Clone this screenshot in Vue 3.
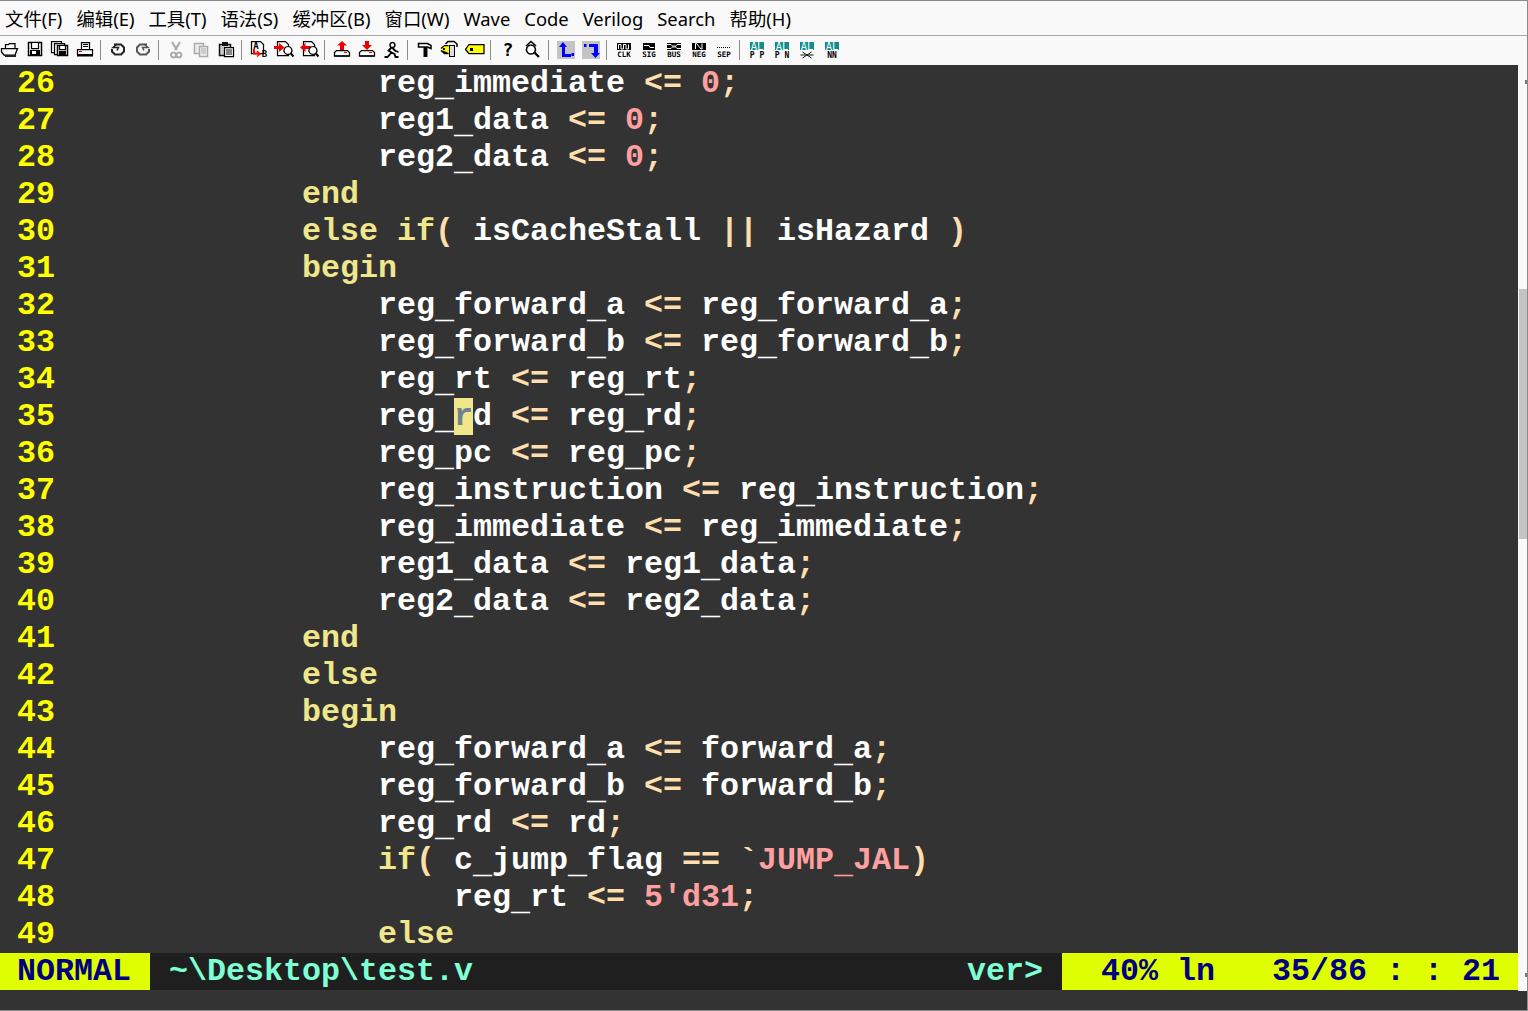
<script setup>
const source = [
  [26, "                reg_immediate <= 0;"],
  [27, "                reg1_data <= 0;"],
  [28, "                reg2_data <= 0;"],
  [29, "            end"],
  [30, "            else if( isCacheStall || isHazard )"],
  [31, "            begin"],
  [32, "                reg_forward_a <= reg_forward_a;"],
  [33, "                reg_forward_b <= reg_forward_b;"],
  [34, "                reg_rt <= reg_rt;"],
  [35, "                reg_§rd <= reg_rd;"],
  [36, "                reg_pc <= reg_pc;"],
  [37, "                reg_instruction <= reg_instruction;"],
  [38, "                reg_immediate <= reg_immediate;"],
  [39, "                reg1_data <= reg1_data;"],
  [40, "                reg2_data <= reg2_data;"],
  [41, "            end"],
  [42, "            else"],
  [43, "            begin"],
  [44, "                reg_forward_a <= forward_a;"],
  [45, "                reg_forward_b <= forward_b;"],
  [46, "                reg_rd <= rd;"],
  [47, "                if( c_jump_flag == `JUMP_JAL)"],
  [48, "                    reg_rt <= 5'd31;"],
  [49, "                else"]
]

const tokenRe = /§.|\s+|\b(?:begin|end|else|if)\b|<=|==|\|\||[;()`]|JUMP|JAL|_|\d+'d\d+|\b\d+\b|[a-zA-Z0-9]+/g
function classify(t) {
  if (t[0] === '§') return 'cursor'
  if (t === '_') return 'under'
  if (/^\s+$/.test(t)) return 'plain'
  if (/^(begin|end|else|if)$/.test(t)) return 'kw'
  if (/^(<=|==|\|\||[;()`])$/.test(t)) return 'op'
  if (t === 'JUMP' || t === 'JAL' || /^\d/.test(t)) return 'num'
  return 'plain'
}
const lines = source.map(([n, text]) => ({
  n,
  tokens: text.match(tokenRe).map((t) => ({
    c: classify(t),
    t: t[0] === '§' ? t.slice(1) : t
  }))
}))
// the underscore inside `JUMP_JAL is part of the pink macro name
for (const l of lines) {
  l.tokens.forEach((t, i) => {
    if (t.c === 'under' && l.tokens[i - 1]?.t === 'JUMP') t.c = 'under pink'
  })
}

const status = {
  mode: 'NORMAL',
  file: '~\\Desktop\\test.v',
  type: 'ver>',
  pos: '40% ln   35/86 : : 21'
}

const menus = ['文件(F)', '编辑(E)', '工具(T)', '语法(S)', '缓冲区(B)', '窗口(W)', 'Wave', 'Code', 'Verilog', 'Search', '帮助(H)']

const P = (d, fill = 'none', stroke = '#000', w = 1.25) => ({ d, fill, stroke, w })
const F = (d, fill = '#000') => ({ d, fill, stroke: 'none', w: 0 })
const L = (x, y, text, size, fill = '#000', weight = 700) => ({ x, y, text, size, fill, weight })

const wave = {
  clk: P('M4.5 9V4.5h2.500V9h2.500V4.500H12V9h2.500V4.500', 'none', '#fff', 1),
  sig: P('M5 5.500h5l1 2h4', 'none', '#fff', 1),
  bus: P('M3 4.500h4l3 3 3-3h4M3 8.500h4l3-3 3 3h4', 'none', '#fff', 1),
  neg: P('M6.500 9V3.500h1L12 9h1V3.500', 'none', '#fff', 1)
}
const dots = 'M3 7h1v1H3zM5 7h1v1H5zM7 7h1v1H7zM9 7h1v1H9zM11 7h1v1h-1zM13 7h1v1h-1zM15 7h1v1h-1z'

const tray = [
  P('M4.500 10.500h11l2 2v3.500h-15v-3.500z', '#fff'),
  F('M3 15h14v2H3z', '#222'),
  F('M12 12h3v1h-3z', '#f00')
]

const icon = (parts, labels = []) => ({ parts, labels })
const alHead = F('M3 2h14v8H3z', '#148a8a')
const al = (parts, labels) => icon([alHead, ...parts], [L(10, 9.5, 'AL', 10.500, '#e8ffff', 400), ...labels])

const groups = [
  [
    icon([P('M5.500 8V4.500h3l1-1h5.500v5', '#fff'), P('M1.500 8.500h16l-2.500 6.500H4l-2.500-3z', '#fff'), F('M5 15h11v2H5z', '#222')]),
    icon([P('M3.500 2.500h13v13h-13z', '#fff', '#000', 1.5), P('M6.500 3v5.500h7V3', '#fff'), F('M5 10h10v5H5z'), F('M7 11h4v3H7z', '#fff')]),
    icon([P('M1.500 1.500h10v11h-10z', '#fff'), P('M4.500 3.500h10v11h-10z', '#fff'), P('M7.500 5.500h10v10h-10z', '#fff', '#000', 1.5), P('M9.500 6v3.500h6V6', '#fff'), F('M9 11h7v4H9z')]),
    icon([P('M6.500 2.500h8v7h-8z', '#fff'), F('M8 4h5v1H8zM8 6h5v1H8z'), P('M2.500 9.500h15v5h-15z', '#fff'), F('M2 15h16v1.500H2z'), F('M4 11h3v1H4z', '#f00')])
  ],
  [
    icon([P('M6 4.500h7l3 3v4l-3 3H7l-3-3V9', 'none', '#222', 2), P('M9 4L5 7.500h5.500l-1.500 3', 'none', '#222', 1.500), F('M7 15h7v1H7z', '#999')]),
    icon([P('M14 4.500H7l-3 3v4l3 3h6l3-3V9', 'none', '#555', 2), P('M11 4l4 3.500H9.500l1.500 3', 'none', '#555', 1.500), F('M7 15h7v1H7z', '#aaa')])
  ],
  [
    icon([P('M6 2l5 8M14 2L9 10', 'none', '#aaa', 2.200), P('M7.500 12.500a2.500 2.500 0 1 1-.1 0M13 12.500a2.500 2.500 0 1 1-.1 0', 'none', '#aaa', 2)]),
    icon([P('M3.500 3.500h9v10h-9z', '#eee', '#aaa', 1.500), P('M8.500 6.500h8v10h-8z', '#eee', '#aaa', 1.500), P('M10 9h5M10 11h5M10 13h5', 'none', '#aaa', 1)]),
    icon([P('M3.500 4.500h11v11h-11z', '#ccc', '#111', 1.500), F('M6 2h6v4H6z', '#111'), P('M8.500 7.500h9v9h-9z', '#fff'), P('M10 10h6M10 12h6M10 14h6', 'none', '#111', 1)])
  ],
  [
    icon([P('M2.500 1.500h9l3 3v9h-12z', '#fff'), P('M5 9v4.500h5', 'none', '#f00', 2), P('M8 11l3 3-3 2.500', 'none', '#f00', 1.500)], [L(7, 9, 'A', 9), L(15.500, 17, 'B', 9)]),
    icon([P('M3.500 1.500h8l3 3v11h-11z', '#fff'), F('M0 6h5V3l5.500 4.500L5 12V9H0z', '#e00'), P('M14 6.500a4 4 0 1 1-.1 0', '#fff'), P('M16.500 13l3 3.500', 'none', '#000', 2)]),
    icon([P('M4.500 1.500h8l3 3v11h-11z', '#fff'), F('M11.500 6h-5V3L1 7.500 6.500 12V9h5z', '#e00'), P('M14 6.500a4 4 0 1 1-.1 0', '#fff'), P('M16.500 13l3 3.500', 'none', '#000', 2)])
  ],
  [
    icon([...tray, F('M10 1l5 4.500h-3V10H8V5.500H5z', '#e00')]),
    icon([...tray, F('M8 1h4v4h3l-5 5-5-5h3z', '#e00')]),
    icon([P('M10.500 2.500a2.500 2.500 0 1 1-.1 0', '#fff', '#000', 1.500), P('M9.500 7.500l-3 3 3 2-4 4.500h-3M10.500 8l3 3 3 1M9.500 12.500l3 1.500 1 3h3', 'none', '#000', 1.800)])
  ],
  [
    icon([P('M3.500 3.500h9l3.500 2v3l-3.500-1.500h-9z', '#fff', '#000', 1.500), F('M8.500 7h3.500v10H8.500z'), F('M12 8h1v9h-1z', '#888')]),
    icon([F('M1 8l3-3h5v8H4l-3-3z', '#ff0'), P('M1 8.500l3.500-3h4M8.500 13.500h-4L1 10.500z', 'none'), F('M3 8h2v2H3z'), F('M9 5h6v12H9z'), F('M10 6h4v10h-4z', '#ddd'), P('M5.500 4l2.500-2.500h6l3 2.500v3', 'none', '#000', 1.500)]),
    icon([F('M4 5h15v8H4L0 9z', '#ff0'), P('M4 4.500h15v9H4L.5 9.500z', 'none'), F('M5 8h3v3H5z')])
  ],
  [
    icon([], [L(10, 16, '?', 18)]),
    icon([P('M8 5a4.500 4.500 0 1 1-.1 0', '#fff', '#000', 1.500), P('M11.500 12.500l4.500 4.500', 'none', '#000', 2.200), P('M3 6l5-4.500L13 6', 'none', '#000', 1.500)])
  ],
  [
    icon([F('M1 1h18v18H1z', '#c4c4c4'), F('M7 2l4 5H9v7h6v3H6V7H3z', '#00f'), F('M15.500 13h2.500v3h-2.500z', '#00f')]),
    icon([F('M1 1h18v18H1z', '#c4c4c4'), F('M3 4h2.500v3H3zM8 4h9v9h2l-4.500 5-4.500-5h3V7H8z', '#00f')])
  ],
  [
    icon([F('M3 3h14v7H3z'), wave.clk], [L(10, 17, 'CLK', 7.500)]),
    icon([F('M4 3h12v7H4z'), wave.sig], [L(10, 17, 'SIG', 7.500)]),
    icon([F('M3 3h14v7H3z'), wave.bus], [L(10, 17, 'BUS', 7.500)]),
    icon([F('M3 3h14v7H3z'), wave.neg], [L(10, 17, 'NEG', 7.500)]),
    icon([F(dots)], [L(10, 17, 'SEP', 7.500)])
  ],
  [
    al([], [L(10, 18, 'P P', 8)]),
    al([], [L(10, 18, 'P N', 8)]),
    al([P('M5.500 12l9 6M14.500 12l-9 6M3.500 15h13', 'none', '#111', 1)], []),
    al([], [L(10, 18, 'NN', 8)])
  ]
]
</script>

<template>
  <div class="window">
    <nav class="menubar">
      <span v-for="m in menus" :key="m">{{ m }}</span>
    </nav>
    <div class="toolbar">
      <template v-for="(group, g) in groups" :key="g">
        <i v-if="g" class="sep"></i>
        <span v-for="(ic, k) in group" :key="k" class="tool">
          <svg width="20" height="20" viewBox="0 0 20 20">
            <path
              v-for="(p, j) in ic.parts"
              :key="j"
              :d="p.d"
              :fill="p.fill"
              :stroke="p.stroke"
              :stroke-width="p.w"
            />
            <text
              v-for="(l, j) in ic.labels"
              :key="'t' + j"
              class="icon-text"
              :x="l.x"
              :y="l.y"
              :font-size="l.size"
              :font-weight="l.weight"
              :fill="l.fill"
              text-anchor="middle"
            >{{ l.text }}</text>
          </svg>
        </span>
      </template>
    </div>
    <div class="middle">
      <main class="editor">
        <div class="code">
          <div v-for="line in lines" :key="line.n" class="row">
            <span class="lnr">{{ line.n }}</span>
            <span class="text"><span v-for="(t, i) in line.tokens" :key="i" :class="t.c">{{ t.t }}</span></span>
          </div>
        </div>
        <footer class="status">
          <span class="mode">{{ status.mode }}</span>
          <span class="file">{{ status.file }}</span>
          <span class="type">{{ status.type }}</span>
          <span class="pos">{{ status.pos }}</span>
        </footer>
      </main>
      <aside class="scrollbar">
        <div class="thumb"></div>
        <i class="grip grip-top"></i>
        <i class="grip grip-bottom"></i>
      </aside>
    </div>
    <div class="cmdline"></div>
  </div>
</template>

<style scoped>
.window {
  width: 1528px;
  height: 1011px;
  box-sizing: border-box;
  display: flex;
  flex-direction: column;
  overflow: hidden;
  background: #f9f9f9;
  border-top: 1px solid #8a8a8a;
  border-bottom: 1px solid #8a8a8a;
  border-right: 1px solid #8a8a8a;
}
.menubar {
  height: 35px;
  box-sizing: border-box;
  flex: none;
  display: flex;
  align-items: center;
  gap: 14px;
  padding: 2px 0 0 5px;
  font: 18.4px/32px "Noto Sans", "Noto Sans CJK SC", sans-serif;
  color: #000;
  border-bottom: 1px solid #a8a8a8;
  white-space: nowrap;
}
.toolbar {
  height: 29px;
  box-sizing: border-box;
  flex: none;
  display: flex;
  align-items: center;
  padding-bottom: 2px;
  margin-left: -2.5px;
}
.tool {
  width: 25px;
  height: 20px;
  flex: none;
  display: flex;
  justify-content: center;
}
.sep {
  width: 1px;
  height: 20px;
  flex: none;
  margin: 0 4.5px 0 2.5px;
  background: #8c8c8c;
}
.icon-text {
  font-family: "DejaVu Sans Mono", "Liberation Mono", monospace;
}
.middle {
  flex: 1;
  min-height: 0;
  display: flex;
}
.editor {
  width: 1518px;
  flex: none;
  display: flex;
  flex-direction: column;
  background: #333333;
  font: 700 31.66px/39px "Liberation Mono", monospace;
  white-space: pre;
  overflow: hidden;
}
.code {
  height: 888px;
  flex: none;
  overflow: hidden;
}
.row {
  height: 37px;
  display: flex;
  padding-left: 17px;
  color: #ffffff;
}
.lnr {
  width: 57px;
  flex: none;
  color: #ffff00;
}
.kw { color: #f0e68c; }
.op { color: #ffdead; }
.num { color: #ffa0a0; }
.plain { color: #ffffff; }
.under {
  color: #ffffff;
  vertical-align: -4px;
  line-height: 1;
}
.under.pink { color: #ffa0a0; }
.cursor {
  display: inline-block;
  height: 37px;
  background: #f0e68c;
  color: #708090;
}
.status {
  height: 37px;
  flex: none;
  display: flex;
  background: #1f1f1f;
  color: #7fffd4;
}
.mode,
.pos {
  background: #dfff00;
  color: #000080;
}
.mode {
  width: 150px;
  box-sizing: border-box;
  padding-left: 17px;
}
.file {
  width: 817px;
  box-sizing: border-box;
  padding-left: 19px;
}
.type { width: 95px; }
.pos {
  flex: 1;
  padding-left: 39px;
}
.scrollbar {
  flex: 1;
  position: relative;
  background: #f9f9f9;
}
.thumb {
  position: absolute;
  top: 224px;
  left: 1px;
  right: 0;
  height: 250px;
  background: #c4c4c4;
}
.grip {
  position: absolute;
  right: 0;
  width: 2px;
  height: 4px;
  background: #777;
}
.grip-top { top: 15px; }
.grip-bottom { top: 908px; }
.cmdline {
  height: 19px;
  flex: none;
  margin-right: -1px;
  background: #333333;
}
</style>
